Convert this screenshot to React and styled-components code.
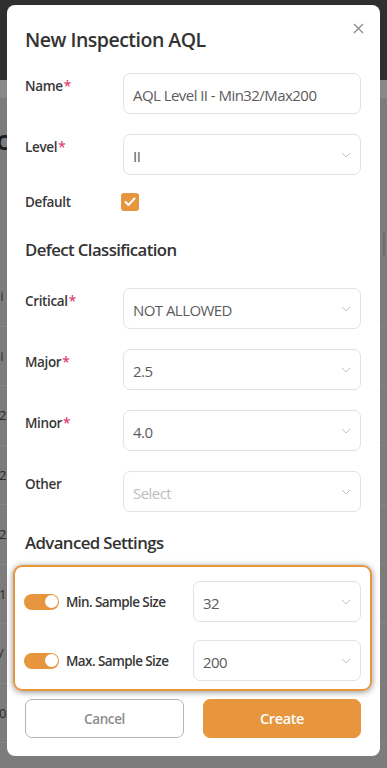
import React from "react";
import styled, { createGlobalStyle } from "styled-components";

const ORANGE = "#E8963D";

const GlobalStyle = createGlobalStyle`
  html, body { margin: 0; padding: 0; }
  body { font-family: "Open Sans", "Noto Sans", sans-serif; background: #7e7e7e; }
  * { box-sizing: border-box; }
`;

/* ---------- dimmed background page ---------- */
const Page = styled.div`
  position: relative;
  width: 387px;
  height: 768px;
  overflow: hidden;
  background: #7c7c7c;
  display: flex;
  flex-direction: column;
`;

const TopBar = styled.div`
  height: 80px;
  background: #2f2f2f;
  flex-shrink: 0;
`;

const SubBar = styled.div`
  height: 18px;
  background: #898989;
  flex-shrink: 0;
`;

const PageHeading = styled.div`
  height: 169px;
  padding-top: 28px;
  margin-left: -4px;
  font-size: 22px;
  line-height: 30px;
  font-weight: 700;
  color: #1e1e1e;
  flex-shrink: 0;
`;

const BgRows = styled.div`
  display: flex;
  flex-direction: column;
`;

const BgRow = styled.div`
  height: 59.5px;
  flex-shrink: 0;
  display: flex;
  align-items: center;
  font-size: 13px;
  color: #2a2a2a;
  border-bottom: 1px solid #848484;
  margin-left: ${(p) => p.$shift || 0}px;
`;

const ScrollThumb = styled.div`
  position: absolute;
  right: 2px;
  top: 232px;
  width: 2px;
  height: 24px;
  background: #6c6c6c;
  border-radius: 1px;
`;

/* ---------- modal ---------- */
const Modal = styled.div`
  position: absolute;
  left: 7px;
  top: 5px;
  width: 373px;
  height: 751px;
  background: #fff;
  border-radius: 8px;
  padding: 21px 19px 18px 18px;
  display: flex;
  flex-direction: column;
`;

const Header = styled.div`
  display: flex;
  align-items: center;
  justify-content: space-between;
  height: 28px;
`;

const Title = styled.h2`
  margin: 0;
  font-size: 19.5px;
  letter-spacing: -0.5px;
  line-height: 28px;
  font-weight: 600;
  color: #333;
`;

const CloseButton = styled.button`
  position: relative;
  top: -12px;
  right: -5px;
  width: 16px;
  height: 16px;
  padding: 0;
  border: none;
  background: none;
  display: flex;
  align-items: center;
  justify-content: center;
  cursor: pointer;
`;

const Section = styled.div`
  display: flex;
  flex-direction: column;
  gap: ${(p) => p.$gap ?? 20}px;
  margin-top: ${(p) => p.$top || 0}px;
`;

const FieldRow = styled.div`
  display: grid;
  grid-template-columns: 98px 1fr;
  align-items: ${(p) => (p.$center ? "center" : "start")};
`;

const Label = styled.label`
  font-size: 13.5px;
  letter-spacing: -0.35px;
  line-height: 20px;
  font-weight: 600;
  color: #383838;
  padding-top: ${(p) => (p.$center ? 0 : 3)}px;
`;

const Required = styled.span`
  color: #e23f73;
  margin-left: 1px;
`;

const Box = styled.div`
  height: 41px;
  border: 1px solid #e2e2e2;
  border-radius: 7px;
  display: flex;
  align-items: center;
  justify-content: space-between;
  padding: 0 9px 0 9px;
  font-size: 15px;
  letter-spacing: -0.55px;
  color: ${(p) => (p.$placeholder ? "#bdbdbd" : "#5c5c5c")};
  background: #fff;
`;

const BoxText = styled.span`
  padding-top: 2px;
`;

const Check = styled.div`
  width: 18px;
  height: 18px;
  border-radius: 3px;
  background: ${ORANGE};
  display: flex;
  align-items: center;
  justify-content: center;
  margin-left: -2px;
`;

const SectionTitle = styled.h3`
  margin: 0;
  font-size: 16.8px;
  letter-spacing: -0.6px;
  line-height: 24px;
  font-weight: 600;
  color: #333;
  margin-top: ${(p) => p.$top || 0}px;
`;

const Advanced = styled.div`
  margin: 10px -11px 0 -12px;
  border: 2px solid ${ORANGE};
  border-radius: 9px;
  padding: 14px 9px 8px 9px;
  box-shadow: 0 1px 6px rgba(0, 0, 0, 0.45);
  display: flex;
  flex-direction: column;
  gap: 18px;
`;

const ToggleRow = styled.div`
  display: grid;
  grid-template-columns: 35px 1fr 168px;
  column-gap: 7px;
  align-items: center;
`;

const Toggle = styled.div`
  width: 35px;
  height: 16px;
  border-radius: 8px;
  background: ${ORANGE};
  display: flex;
  align-items: center;
  justify-content: ${(p) => (p.$on ? "flex-end" : "flex-start")};
  padding: 0 1.5px;
`;

const Knob = styled.div`
  width: 13px;
  height: 13px;
  border-radius: 50%;
  background: #fff;
`;

const ToggleLabel = styled.span`
  font-size: 13.5px;
  letter-spacing: -0.6px;
  font-weight: 600;
  color: #383838;
  white-space: nowrap;
`;

const Footer = styled.div`
  display: grid;
  grid-template-columns: 159px 158px;
  justify-content: space-between;
  margin-top: 8px;
`;

const Button = styled.button`
  height: 39px;
  border-radius: 7px;
  font-family: inherit;
  font-size: ${(p) => (p.$primary ? 14.5 : 13.5)}px;
  letter-spacing: -0.4px;
  font-weight: 600;
  cursor: pointer;
  border: 1px solid ${(p) => (p.$primary ? ORANGE : "#b5b5b5")};
  background: ${(p) => (p.$primary ? ORANGE : "#fff")};
  color: ${(p) => (p.$primary ? "#fff" : "#8c8c8c")};
`;

const Chevron = () => (
  <svg width="10" height="6" viewBox="0 0 10 6" fill="none">
    <path d="M1 1l4 4 4-4" stroke="#c4c4c4" strokeWidth="1" />
  </svg>
);

const Select = ({ value, placeholder }) => (
  <Box $placeholder={!value}>
    <BoxText>{value || placeholder}</BoxText>
    <Chevron />
  </Box>
);

const Field = ({ label, required, children }) => (
  <FieldRow>
    <Label>
      {label}
      {required && <Required>*</Required>}
    </Label>
    {children}
  </FieldRow>
);

export default function App() {
  return (
    <>
      <GlobalStyle />
      <Page>
        <TopBar />
        <SubBar />
        <PageHeading>C</PageHeading>
        <BgRows>
          <BgRow $shift={-3}>li</BgRow>
          <BgRow $shift={-3}>li</BgRow>
          <BgRow $shift={-1}>2</BgRow>
          <BgRow $shift={-1}>2</BgRow>
          <BgRow $shift={-1}>2</BgRow>
          <BgRow $shift={-1}>1</BgRow>
          <BgRow $shift={-1}>/</BgRow>
          <BgRow $shift={-1}>0/</BgRow>
          <BgRow $shift={0}>2.5/4.0 - Mi20/ Ma315</BgRow>
        </BgRows>
        <ScrollThumb />

        <Modal>
          <Header>
            <Title>New Inspection AQL</Title>
            <CloseButton aria-label="Close">
              <svg width="11" height="11" viewBox="0 0 11 11">
                <path d="M1 1l9 9M10 1l-9 9" stroke="#8a8a8a" strokeWidth="1.3" />
              </svg>
            </CloseButton>
          </Header>

          <Section $top={19}>
            <Field label="Name" required>
              <Box>
                <BoxText>AQL Level II - Min32/Max200</BoxText>
              </Box>
            </Field>
            <Field label="Level" required>
              <Select value="II" />
            </Field>
          </Section>

          <Section $top={17}>
            <FieldRow $center>
              <Label $center>Default</Label>
              <Check>
                <svg width="12" height="10" viewBox="0 0 12 10" fill="none">
                  <path d="M1.5 5l3 3 6-6.5" stroke="#fff" strokeWidth="2" strokeLinecap="round" strokeLinejoin="round" />
                </svg>
              </Check>
            </FieldRow>
          </Section>

          <SectionTitle $top={26}>Defect Classification</SectionTitle>

          <Section $top={26}>
            <Field label="Critical" required>
              <Select value="NOT ALLOWED" />
            </Field>
            <Field label="Major" required>
              <Select value="2.5" />
            </Field>
            <Field label="Minor" required>
              <Select value="4.0" />
            </Field>
            <Field label="Other">
              <Select placeholder="Select" />
            </Field>
          </Section>

          <SectionTitle $top={19}>Advanced Settings</SectionTitle>

          <Advanced>
            <ToggleRow>
              <Toggle $on>
                <Knob />
              </Toggle>
              <ToggleLabel>Min. Sample Size</ToggleLabel>
              <Select value="32" />
            </ToggleRow>
            <ToggleRow>
              <Toggle $on>
                <Knob />
              </Toggle>
              <ToggleLabel>Max. Sample Size</ToggleLabel>
              <Select value="200" />
            </ToggleRow>
          </Advanced>

          <Footer>
            <Button>Cancel</Button>
            <Button $primary>Create</Button>
          </Footer>
        </Modal>
      </Page>
    </>
  );
}
